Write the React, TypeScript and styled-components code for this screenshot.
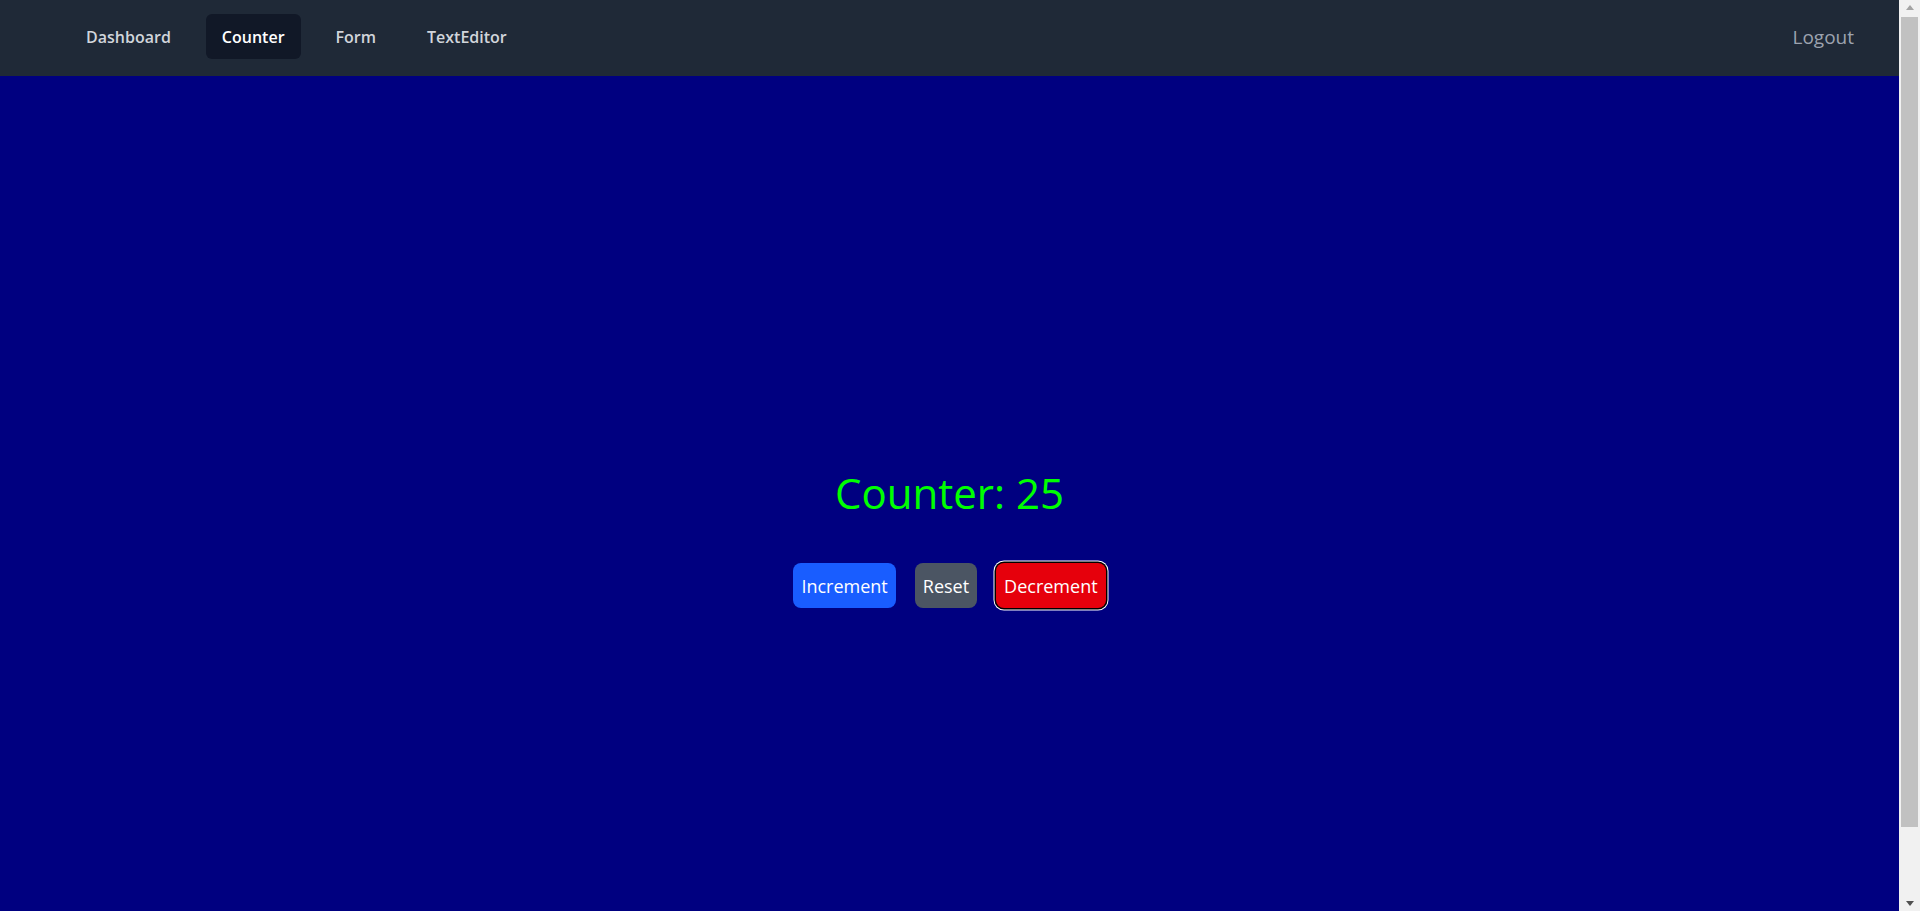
import React, { useState } from "react";
import styled, { createGlobalStyle } from "styled-components";

const Global = createGlobalStyle`
  html, body { margin: 0; padding: 0; overflow: hidden; }
  body {
    font-family: "Open Sans", "Noto Sans", Arial, sans-serif;
    background: #000080;
  }
  * { box-sizing: border-box; }
`;

const Frame = styled.div`
  display: flex;
  height: 100vh;
  overflow: hidden;
`;

const Viewport = styled.div`
  flex: 1;
  min-width: 0;
  overflow-y: auto;
  scrollbar-width: none;
  &::-webkit-scrollbar { display: none; }
`;

const ScrollBar = styled.aside`
  width: 21px;
  flex: 0 0 21px;
  background: #f1f1f1;
  display: flex;
  flex-direction: column;
`;

const ArrowButton = styled.div<{ $dir: "up" | "down" }>`
  height: 17px;
  flex: 0 0 17px;
  display: flex;
  align-items: center;
  justify-content: center;
  &::before {
    content: "";
    width: 0;
    height: 0;
    border-left: 4.5px solid transparent;
    border-right: 4.5px solid transparent;
    ${(p) =>
      p.$dir === "up"
        ? "border-bottom: 5px solid #a3a3a3; margin-top: -2px;"
        : "border-top: 5px solid #505050; margin-top: 2px;"}
  }
`;

const Track = styled.div`
  flex: 1;
  display: flex;
  flex-direction: column;
`;

const Thumb = styled.div`
  height: 810px;
  margin: 0 2px;
  background: #c1c1c1;
`;

const NavBar = styled.nav`
  height: 76px;
  background: #1f2937;
  display: flex;
  align-items: flex-start;
  justify-content: space-between;
  padding: 14px 45px 0 70px;
`;

const NavLinks = styled.div`
  display: flex;
  gap: 19px;
`;

const NavLink = styled.a<{ $active?: boolean }>`
  height: 45px;
  padding: 0 16px;
  display: flex;
  align-items: center;
  border-radius: 6px;
  font-size: 16px;
  font-weight: 600;
  text-decoration: none;
  cursor: pointer;
  color: ${(p) => (p.$active ? "#ffffff" : "#d1d5db")};
  background: ${(p) => (p.$active ? "#111827" : "transparent")};
`;

const Logout = styled.button`
  height: 45px;
  padding: 0;
  border: none;
  background: transparent;
  color: #9ca3af;
  font-family: inherit;
  font-size: 19px;
  cursor: pointer;
`;

const Main = styled.main`
  min-height: 100vh;
  background: #000080;
  display: flex;
  flex-direction: column;
  align-items: center;
  justify-content: center;
  padding-top: 10px;
`;

const Title = styled.h1`
  margin: 0;
  font-size: 42px;
  line-height: 56px;
  font-weight: 400;
  color: #00ff00;
`;

const ButtonRow = styled.div`
  margin-top: 42px;
  display: flex;
  gap: 19px;
`;

const ActionButton = styled.button<{ $bg: string; $focused?: boolean }>`
  height: 45px;
  padding: 0 8px;
  border: none;
  border-radius: 8px;
  background: ${(p) => p.$bg};
  color: #ffffff;
  font-family: inherit;
  font-size: 18px;
  cursor: pointer;
  box-shadow: ${(p) =>
    p.$focused ? "0 0 0 1.5px #000000, 0 0 0 2.5px #ffffff" : "none"};
  outline: none;
`;

export default function App() {
  const [count, setCount] = useState(25);
  return (
    <>
      <Global />
      <Frame>
        <Viewport>
          <NavBar>
            <NavLinks>
              <NavLink>Dashboard</NavLink>
              <NavLink $active>Counter</NavLink>
              <NavLink>Form</NavLink>
              <NavLink>TextEditor</NavLink>
            </NavLinks>
            <Logout>Logout</Logout>
          </NavBar>
          <Main>
            <Title>Counter: {count}</Title>
            <ButtonRow>
              <ActionButton $bg="#195dff" onClick={() => setCount(count + 1)}>
                Increment
              </ActionButton>
              <ActionButton $bg="#4b5563" onClick={() => setCount(0)}>
                Reset
              </ActionButton>
              <ActionButton $bg="#e6000c" $focused onClick={() => setCount(count - 1)}>
                Decrement
              </ActionButton>
            </ButtonRow>
          </Main>
        </Viewport>
        <ScrollBar aria-hidden="true">
          <ArrowButton $dir="up" />
          <Track>
            <Thumb />
          </Track>
          <ArrowButton $dir="down" />
        </ScrollBar>
      </Frame>
    </>
  );
}
